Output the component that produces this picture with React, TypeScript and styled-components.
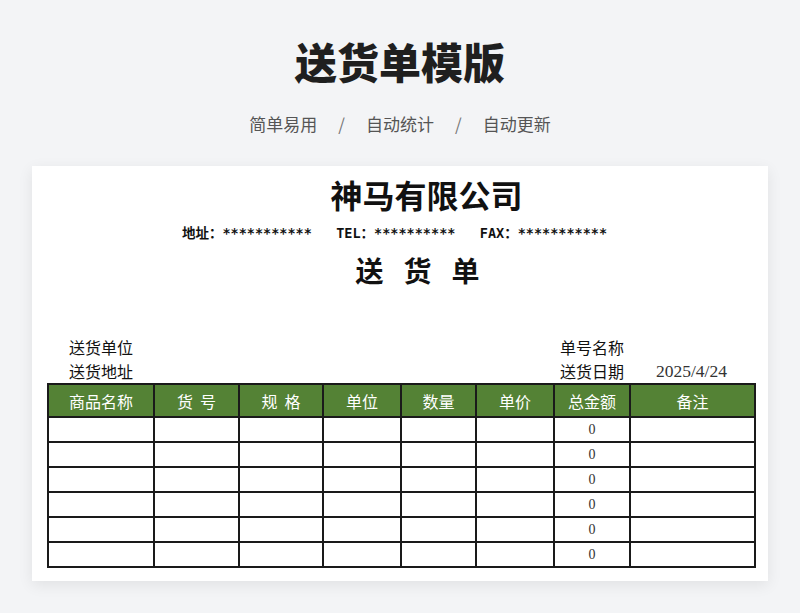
import React from "react";
import styled, { createGlobalStyle } from "styled-components";

const Global = createGlobalStyle`
  html, body { margin: 0; padding: 0; }
  body {
    background: #f3f4f6;
    font-family: "Noto Sans CJK SC", "Noto Sans", sans-serif;
    color: #222;
  }
`;

const Page = styled.div`
  width: 800px;
  height: 613px;
  overflow: hidden;
  display: flex;
  flex-direction: column;
  align-items: center;
`;

const Title = styled.h1`
  margin: 34px 0 0;
  font-size: 42px;
  line-height: 53px;
  font-weight: 900;
  color: #1f1f1f;
`;

const Subtitle = styled.div`
  margin-top: 25px;
  display: flex;
  gap: 19px;
  font-size: 17px;
  line-height: 24px;
  color: #555;
`;

const Slash = styled.span`
  color: #777;
  padding: 0 2px;
`;

const Card = styled.div`
  margin-top: 30px;
  width: 736px;
  height: 415px;
  background: #fff;
  box-shadow: 0 4px 14px rgba(0, 0, 0, 0.08);
  display: flex;
  flex-direction: column;
  padding: 10px 14px 0 15px;
  box-sizing: border-box;
`;

const Heading = styled.div<{ $shift: number; $size: number; $lh: number; $mt: number; $ls?: number }>`
  margin-top: ${(p) => p.$mt}px;
  text-align: center;
  font-size: ${(p) => p.$size}px;
  line-height: ${(p) => p.$lh}px;
  font-weight: 700;
  letter-spacing: ${(p) => p.$ls ?? 0}px;
  color: #111;
  padding-left: ${(p) => (p.$shift > 0 ? p.$shift * 2 : 0)}px;
  padding-right: ${(p) => (p.$shift < 0 ? -p.$shift * 2 : 0)}px;
  white-space: pre;
`;

const ContactLine = styled(Heading)`
  font-family: "DejaVu Sans Mono", "Noto Sans CJK SC", monospace;
`;

const Info = styled.div`
  margin-top: 48px;
  display: grid;
  grid-template-columns: 491px 96px auto;
  padding-left: 22px;
  font-size: 16px;
  line-height: 24px;
  color: #111;
`;

const DateText = styled.span`
  font-family: "Liberation Serif", serif;
  font-size: 17.5px;
  color: #333;
`;

const Table = styled.table`
  border-collapse: collapse;
  width: 707px;
  table-layout: fixed;
`;

const Th = styled.th`
  background: #548235;
  color: #fff;
  font-weight: 400;
  font-size: 16px;
  height: 31px;
  padding: 0;
  border: 2px solid #1a1a1a;
  text-align: center;
  white-space: pre;
`;

const Td = styled.td`
  height: 23px;
  padding: 0;
  border: 2px solid #1a1a1a;
  text-align: center;
  font-family: "Liberation Serif", serif;
  font-size: 14px;
  color: #333;
`;

const widths = [106, 85, 84, 78, 75, 78, 76, 125];
const headers = ["商品名称", "货  号", "规  格", "单位", "数量", "单价", "总金额", "备注"];

export default function App() {
  return (
    <Page>
      <Global />
      <Title>送货单模版</Title>
      <Subtitle>
        <span>简单易用</span>
        <Slash>/</Slash>
        <span>自动统计</span>
        <Slash>/</Slash>
        <span>自动更新</span>
      </Subtitle>
      <Card>
        <Heading $shift={26} $size={32} $lh={36} $mt={0}>神马有限公司</Heading>
        <ContactLine $shift={-6} $size={13.5} $lh={18} $mt={12}>
          {"地址：***********   TEL：**********   FAX：***********"}
        </ContactLine>
        <Heading $shift={27} $size={28} $lh={34} $mt={11} $ls={20}>送货单</Heading>
        <Info>
          <span>送货单位</span>
          <span>单号名称</span>
          <span />
          <span>送货地址</span>
          <span>送货日期</span>
          <DateText>2025/4/24</DateText>
        </Info>
        <Table>
          <colgroup>
            {widths.map((w, i) => (
              <col key={i} style={{ width: w }} />
            ))}
          </colgroup>
          <thead>
            <tr>
              {headers.map((h) => (
                <Th key={h}>{h}</Th>
              ))}
            </tr>
          </thead>
          <tbody>
            {Array.from({ length: 6 }).map((_, r) => (
              <tr key={r}>
                {widths.map((_, c) => (
                  <Td key={c}>{c === 6 ? "0" : ""}</Td>
                ))}
              </tr>
            ))}
          </tbody>
        </Table>
      </Card>
    </Page>
  );
}
